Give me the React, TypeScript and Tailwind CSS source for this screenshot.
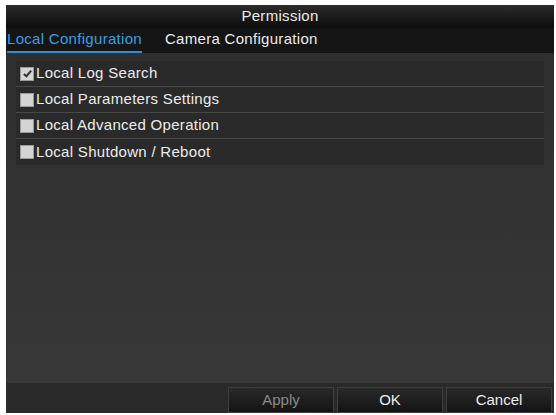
import React from 'react';

const rows = [
  { label: 'Local Log Search', checked: true },
  { label: 'Local Parameters Settings', checked: false },
  { label: 'Local Advanced Operation', checked: false },
  { label: 'Local Shutdown / Reboot', checked: false },
];

function Box({ checked }: { checked: boolean }) {
  return (
    <span className="flex size-[14px] shrink-0 items-center justify-center bg-[#d4d4d4] border border-[#9a9a9a]">
      {checked && (
        <svg viewBox="0 0 12 12" className="size-[11px]">
          <path d="M2 6.5 L4.8 9 L10 2.8" fill="none" stroke="#333" strokeWidth="2.2" />
        </svg>
      )}
    </span>
  );
}

export default function App() {
  return (
    <div
      className="h-[415px] w-[556px] bg-white pb-[2px] pl-[6px] pr-[2px] pt-[5px] text-[#ececec]"
      style={{ fontFamily: '"Liberation Sans", Arial, sans-serif' }}
    >
      <div className="flex h-full flex-col bg-[#333]">
        <div className="flex h-[23px] shrink-0 items-center justify-center bg-gradient-to-b from-[#2c2c2c] to-[#0c0c0c] text-[15px] tracking-[0.3px]">
          Permission
        </div>
        <div className="flex h-[25px] shrink-0 items-end gap-[23px] bg-[#151515] pl-[1px] text-[15px] tracking-[0.3px]">
          <span className="border-b-2 border-[#2f8fd6] pb-[1px] text-[#3c9ee6]">Local Configuration</span>
          <span className="pb-[3px]">Camera Configuration</span>
        </div>
        <div className="flex flex-1 flex-col bg-gradient-to-b from-[#2f2f2f] to-[#373737] px-[10px] pt-[8px]">
          <div className="flex flex-col bg-[#2a2a2a]">
            {rows.map((r, i) => (
              <div
                key={r.label}
                className={`flex h-[26px] items-center gap-[2px] pl-[4px] text-[15px] tracking-[0.3px] ${
                  i < rows.length - 1 ? 'border-b border-[#474747]' : ''
                }`}
              >
                <Box checked={r.checked} />
                <span>{r.label}</span>
              </div>
            ))}
          </div>
        </div>
        <div className="flex h-[30px] shrink-0 items-end justify-end gap-[3px] bg-[#2a2a2a] pr-[2px]">
          {['Apply', 'OK', 'Cancel'].map((b) => (
            <button
              key={b}
              className={`flex h-[26px] w-[106px] items-center justify-center border border-[#3e3e3e] bg-gradient-to-b from-[#2a2a2a] to-[#141414] text-[15px] ${
                b === 'Apply' ? 'text-[#8a8a8a]' : 'text-[#ececec]'
              }`}
            >
              {b}
            </button>
          ))}
        </div>
      </div>
    </div>
  );
}
